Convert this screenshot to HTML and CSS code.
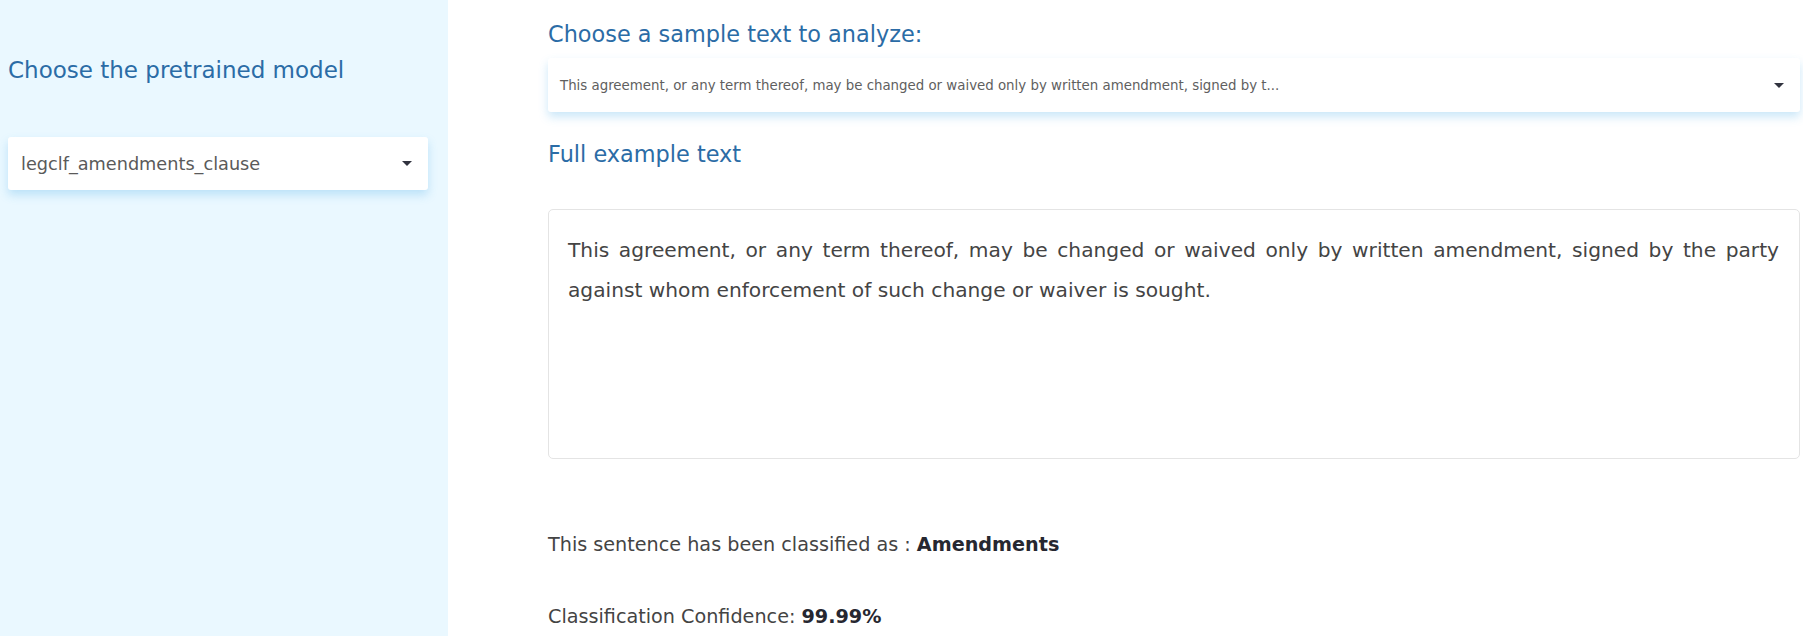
FILE: index.html
```html
<!DOCTYPE html>
<html lang="en">
<head>
    <meta charset="UTF-8">
    <meta name="viewport" content="width=device-width, initial-scale=1.0">
    <title>Legal Clause Classification</title>
    <link rel="stylesheet" href="styles.css">
</head>
<body>
    <div class="app">
        <aside class="sidebar">
            <h2 class="sidebar-title">Choose the pretrained model</h2>
            <div class="select">
                <span class="select-value">legclf_amendments_clause</span>
                <span class="caret"></span>
            </div>
        </aside>
        <main class="main">
            <h3 class="section-title">Choose a sample text to analyze:</h3>
            <div class="select select-wide">
                <span class="select-value">This agreement, or any term thereof, may be changed or waived only by written amendment, signed by t...</span>
                <span class="caret"></span>
            </div>
            <h3 class="section-title section-gap">Full example text</h3>
            <div class="text-box">
                This agreement, or any term thereof, may be changed or waived only by written amendment, signed by the party against whom enforcement of such change or waiver is sought.
            </div>
            <p class="result result-first">This sentence has been classified as : <b>Amendments</b></p>
            <p class="result">Classification Confidence: <b>99.99%</b></p>
        </main>
    </div>
</body>
</html>
```

FILE: styles.css
```css
* {
    margin: 0;
    padding: 0;
    box-sizing: border-box;
}

body {
    font-family: 'DejaVu Sans', 'Open Sans', sans-serif;
    background: #fff;
    color: #31333f;
    overflow: hidden;
}

.app {
    display: flex;
    min-height: 100vh;
}

.sidebar {
    width: 448px;
    flex-shrink: 0;
    background: #eaf8ff;
    padding: 55px 20px 0 8px;
}

.sidebar-title {
    font-size: 23px;
    line-height: 30px;
    font-weight: 400;
    color: #2b6ca6;
    margin-bottom: 52px;
}

.select {
    display: flex;
    align-items: center;
    justify-content: space-between;
    height: 53px;
    padding: 0 16px 0 13px;
    background: #fff;
    border-radius: 3px;
    box-shadow: 0 5px 10px rgba(70, 170, 230, 0.28);
}

.select-value {
    font-size: 17.7px;
    color: #5a5a5a;
    white-space: nowrap;
}

.caret {
    width: 0;
    height: 0;
    border-left: 5px solid transparent;
    border-right: 5px solid transparent;
    border-top: 5px solid #31333f;
}

.main {
    flex: 1;
    padding: 19px 3px 0 100px;
}

.section-title {
    font-size: 22.4px;
    line-height: 30px;
    font-weight: 400;
    color: #2b6ca6;
    margin-bottom: 9px;
}

.select-wide {
    height: 54px;
    padding-left: 12px;
    padding-right: 16px;
}

.select-wide .select-value {
    font-size: 13.35px;
    color: #606060;
}

.section-gap {
    margin-top: 27px;
    margin-bottom: 40px;
}

.text-box {
    height: 250px;
    border: 1px solid #e4e4e4;
    border-radius: 5px;
    padding: 20px 20px 0 19px;
    font-size: 20.2px;
    line-height: 40px;
    text-align: justify;
    color: #444;
}

.result {
    font-size: 19.2px;
    line-height: 24px;
    color: #444;
    margin-top: 48px;
}

.result-first {
    margin-top: 74px;
}

.result b {
    font-weight: 600;
    color: #262730;
}
```
